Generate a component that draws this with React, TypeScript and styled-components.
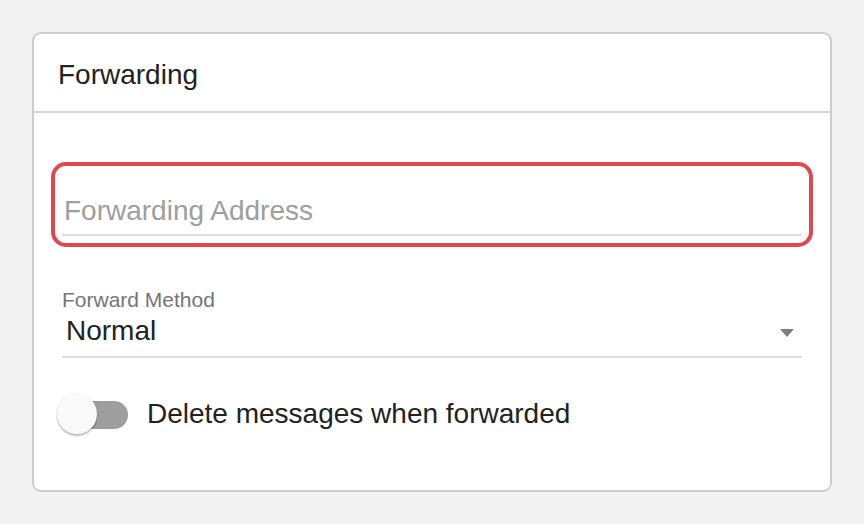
import React, { useState } from "react"
import styled, { createGlobalStyle } from "styled-components"

const GlobalStyle = createGlobalStyle`
    html, body {
        margin: 0;
        padding: 0;
        background: #f2f2f2;
        font-family: "Liberation Sans", Arial, sans-serif;
    }
`

const Page = styled.div`
    padding: 32px;
    box-sizing: border-box;
    width: 864px;
    height: 524px;
`

const Card = styled.div`
    width: 800px;
    height: 460px;
    box-sizing: border-box;
    background: white;
    border: 2px solid #cdcdcd;
    border-radius: 9px;
    display: flex;
    flex-direction: column;
`

const Header = styled.div`
    height: 73px;
    padding: 4px 24px 0;
    flex-shrink: 0;
    display: flex;
    align-items: center;
    border-bottom: 2px solid #d6d6d6;
    font-size: 28px;
    color: #222;
`

const Body = styled.div`
    padding: 60px 28px 0;
    display: flex;
    flex-direction: column;
`

const TextField = styled.label<{ $focused: boolean }>`
    display: block;
    padding-top: 22px;
    border-radius: 4px;
    outline: ${(p) => (p.$focused ? "4px solid #e0474f" : "none")};
    outline-offset: 7px;

    input {
        display: block;
        width: 100%;
        box-sizing: border-box;
        border: none;
        border-bottom: 2px solid #dddddd;
        padding: 0 2px 7px;
        height: 41px;
        line-height: 32px;
        font-family: inherit;
        font-size: 28px;
        color: #222;
        background: transparent;
        outline: none;

        &::placeholder {
            color: #9e9e9e;
        }
    }
`

const SelectField = styled.div`
    margin-top: 52px;
    display: flex;
    flex-direction: column;

    .label {
        font-size: 21px;
        line-height: 24px;
        color: #757575;
        margin-bottom: 3px;
    }

    .value {
        display: flex;
        align-items: center;
        justify-content: space-between;
        padding: 0 8px 9px 4px;
        border-bottom: 2px solid #dddddd;
        font-size: 28px;
        line-height: 32px;
        color: #222;
    }
`

const Arrow = styled.span`
    width: 0;
    height: 0;
    margin-top: 4px;
    border-left: 7px solid transparent;
    border-right: 7px solid transparent;
    border-top: 8px solid #7d7d7d;
`

const SwitchRow = styled.div`
    margin-top: 36px;
    display: flex;
    align-items: center;
    gap: 19px;
    font-size: 28px;
    color: #222;
`

const Switch = styled.div<{ $on: boolean }>`
    position: relative;
    width: 66px;
    height: 40px;
    flex-shrink: 0;
    cursor: pointer;

    .track {
        position: absolute;
        left: 0;
        right: 0;
        top: 7px;
        height: 28px;
        border-radius: 14px;
        background: ${(p) => (p.$on ? "#e88a8f" : "#9e9e9e")};
    }

    .thumb {
        position: absolute;
        top: 0;
        left: ${(p) => (p.$on ? "26px" : "-5px")};
        width: 40px;
        height: 40px;
        border-radius: 50%;
        background: #fafafa;
        box-shadow: 0 2px 2px rgba(0, 0, 0, 0.24), 0 0 2px rgba(0, 0, 0, 0.12);
    }
`

const App: React.FC = () => {
    const [deleteOnForward, setDeleteOnForward] = useState(false)

    return (
        <Page>
            <GlobalStyle />
            <Card>
                <Header>Forwarding</Header>
                <Body>
                    <TextField $focused>
                        <input type="text" placeholder="Forwarding Address" />
                    </TextField>
                    <SelectField>
                        <div className="label">Forward Method</div>
                        <div className="value">
                            <span>Normal</span>
                            <Arrow />
                        </div>
                    </SelectField>
                    <SwitchRow>
                        <Switch
                            $on={deleteOnForward}
                            onClick={() => setDeleteOnForward(!deleteOnForward)}
                        >
                            <div className="track" />
                            <div className="thumb" />
                        </Switch>
                        <span>Delete messages when forwarded</span>
                    </SwitchRow>
                </Body>
            </Card>
        </Page>
    )
}

export default App
